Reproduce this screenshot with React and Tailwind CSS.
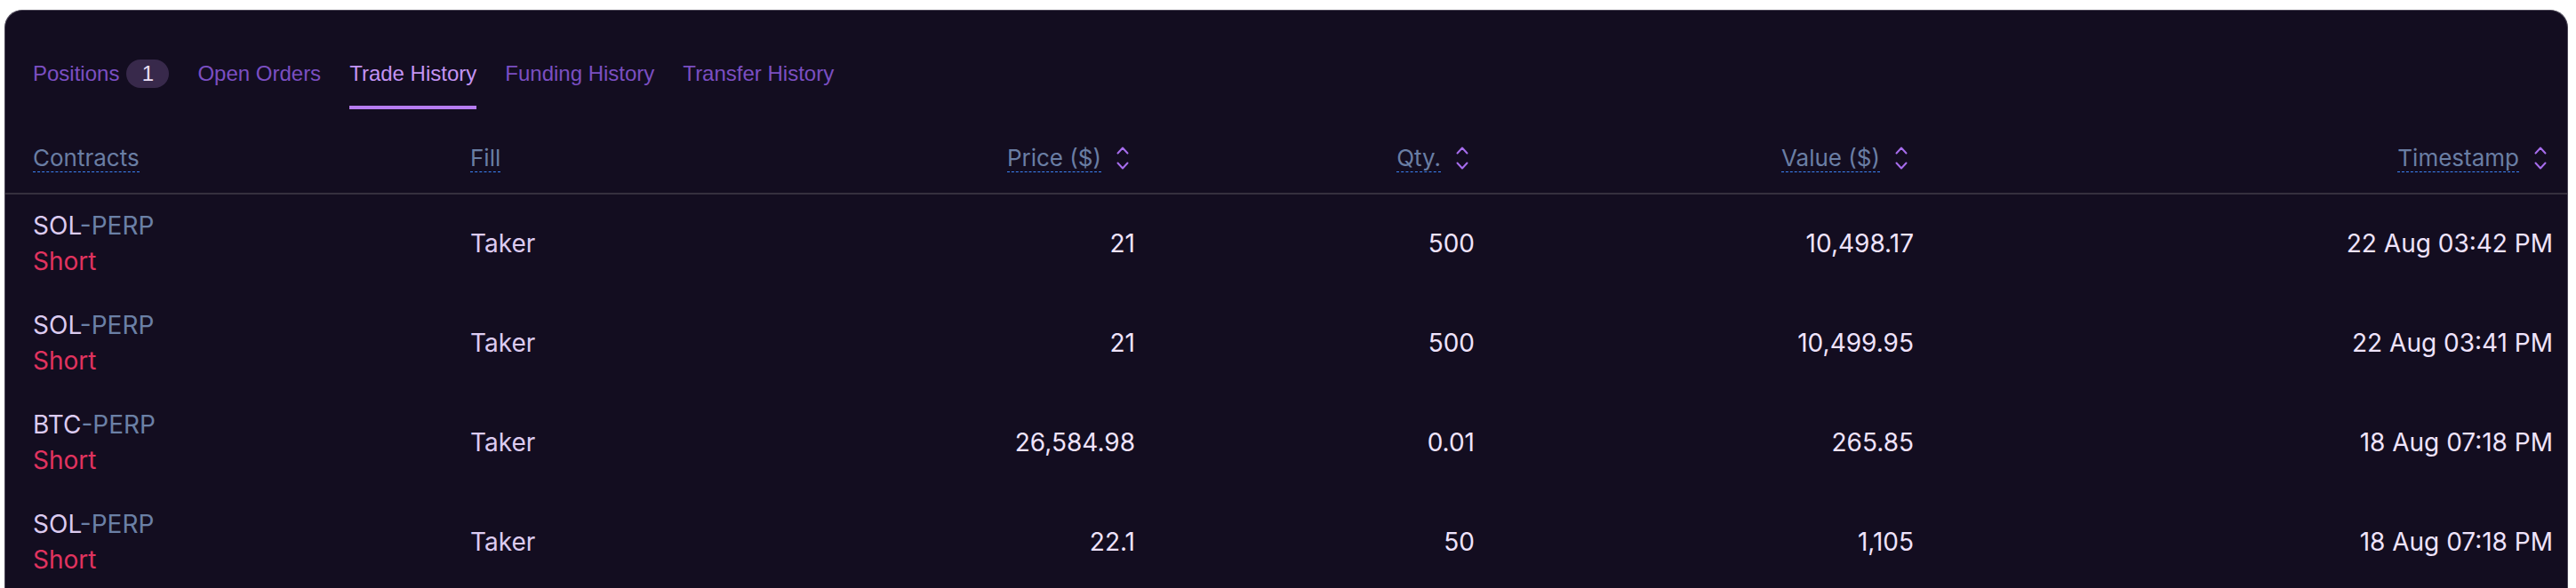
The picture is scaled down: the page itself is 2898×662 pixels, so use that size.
const tabs = [
  { label: 'Positions', badge: '1' },
  { label: 'Open Orders' },
  { label: 'Trade History', active: true },
  { label: 'Funding History' },
  { label: 'Transfer History' },
]

const trades = [
  { base: 'SOL', price: '21', qty: '500', value: '10,498.17', time: '22 Aug 03:42 PM' },
  { base: 'SOL', price: '21', qty: '500', value: '10,499.95', time: '22 Aug 03:41 PM' },
  { base: 'BTC', price: '26,584.98', qty: '0.01', value: '265.85', time: '18 Aug 07:18 PM' },
  { base: 'SOL', price: '22.1', qty: '50', value: '1,105', time: '18 Aug 07:18 PM' },
]

const cols = 'grid grid-cols-[492px_300px_448px_382px_494px_719px]'

const SortIcon = () => (
  <svg width="14" height="26" viewBox="0 0 14 26" fill="none" stroke="#a66cec" strokeWidth="2" strokeLinecap="round" strokeLinejoin="round">
    <path d="M1.5 7.5 7 1.5l5.5 6" />
    <path d="M1.5 18.5 7 24.5l5.5-6" />
  </svg>
)

const HeadLabel = ({ children }) => (
  <span className="block border-b border-dashed border-[#3b82f6] leading-[31px]">{children}</span>
)

const SortHead = ({ children }) => (
  <div className="flex items-center justify-end gap-[17px] pr-[7px]">
    <HeadLabel>{children}</HeadLabel>
    <SortIcon />
  </div>
)

export default function App() {
  return (
    <div className="min-h-screen bg-white pl-[5px] pr-[9px] pt-[11px]">
      <div className="rounded-t-[20px] border border-b-0 border-[#4b4656] bg-[#130d20] pl-[31px] pr-[16px] pt-[55px] pb-10">
        <nav className="flex items-start gap-8 font-['Liberation_Sans',Arial,sans-serif] text-[24px]">
          {tabs.map((t) => (
            <div
              key={t.label}
              className={
                'flex h-[56px] items-start border-b-4 ' +
                (t.active ? 'border-[#b67cf0] text-[#c394f4]' : 'border-transparent text-[#7b4fc2]')
              }
            >
              <div className="flex h-8 items-center leading-8">
                {t.label}
                {t.badge && (
                  <span className="ml-2 flex h-8 w-12 items-center justify-center rounded-full bg-[#38294b] text-[#ebe0f7]">
                    {t.badge}
                  </span>
                )}
              </div>
            </div>
          ))}
        </nav>

        <div className="-ml-[31px] -mr-[16px] font-['Inter',sans-serif]">
          <div className={cols + ' items-center border-b-2 border-[#35303e] pl-[31px] pr-[16px] pt-[39px] pb-[23px] text-[26px] leading-[31px] text-[#6a7ea4]'}>
            <div className="flex">
              <HeadLabel>Contracts</HeadLabel>
            </div>
            <div className="flex">
              <HeadLabel>Fill</HeadLabel>
            </div>
            <SortHead>Price ($)</SortHead>
            <SortHead>Qty.</SortHead>
            <SortHead>Value ($)</SortHead>
            <SortHead>Timestamp</SortHead>
          </div>

          {trades.map((r, i) => (
            <div key={i} className={cols + ' items-center pl-[31px] pr-[16px] pt-[15px] pb-[17px] text-[28px] leading-10 text-[#efe3fc]'}>
              <div>
                <div>
                  <span className="text-[#dccbf0]">{r.base}</span>
                  <span className="text-[#6b80a6]">-PERP</span>
                </div>
                <div className="text-[#e0335f]">Short</div>
              </div>
              <div className="text-[#dccbf0]">Taker</div>
              <div className="text-right">{r.price}</div>
              <div className="text-right">{r.qty}</div>
              <div className="text-right">{r.value}</div>
              <div className="text-right">{r.time}</div>
            </div>
          ))}
        </div>
      </div>
    </div>
  )
}
